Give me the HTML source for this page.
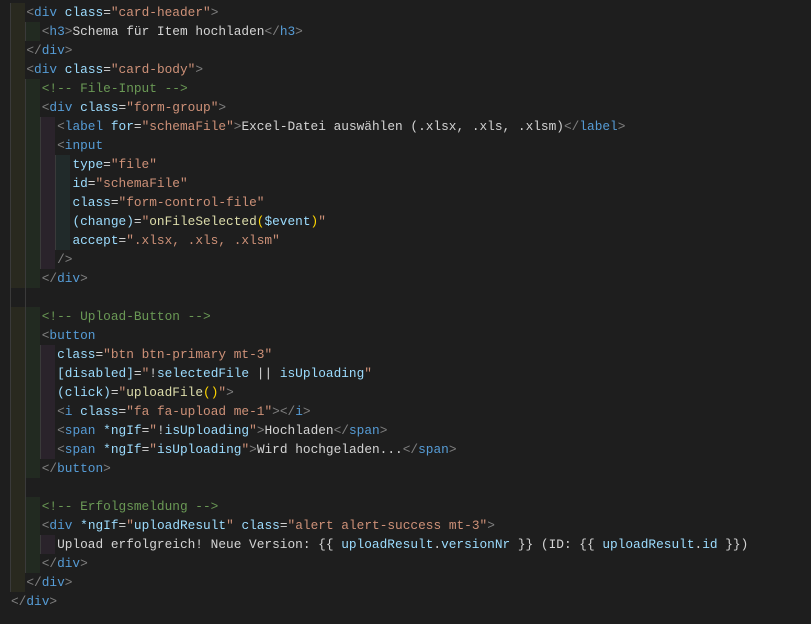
<!DOCTYPE html>
<html><head><meta charset="utf-8"><style>
body{margin:0;background:#1e1e1e;width:811px;height:624px;overflow:hidden}
.c{position:absolute;left:0;top:3px;font-family:"Liberation Mono",monospace;font-size:12.8px;color:#d4d4d4}
.ln{height:19px;line-height:19px;white-space:pre;padding-left:11px;position:relative}
.b{position:absolute;top:0;height:19px;width:15px;border-left:1px solid #3a3a3a;box-sizing:border-box}
.b1{left:10px;background:#29291f}.b2{left:25px;background:#222a21}.b3{left:40px;background:#2a232b}.b4{left:55px;background:#212a2a}
.g{position:absolute;top:0;height:19px;width:1px;background:#3a3a3a}
.t{position:relative}
.p{color:#808080}.n{color:#569cd6}.a{color:#9cdcfe}.s{color:#ce9178}.cm{color:#6a9955}.f{color:#dcdcaa}.y{color:#ffd700}
</style></head><body><div class="c">
<div class="ln"><i class="b b1"></i><span class="t">  <span class="p">&lt;</span><span class="n">div</span> <span class="a">class</span>=<span class="s">"card-header"</span><span class="p">&gt;</span></span></div>
<div class="ln"><i class="b b1"></i><i class="b b2"></i><span class="t">    <span class="p">&lt;</span><span class="n">h3</span><span class="p">&gt;</span>Schema für Item hochladen<span class="p">&lt;/</span><span class="n">h3</span><span class="p">&gt;</span></span></div>
<div class="ln"><i class="b b1"></i><span class="t">  <span class="p">&lt;/</span><span class="n">div</span><span class="p">&gt;</span></span></div>
<div class="ln"><i class="b b1"></i><span class="t">  <span class="p">&lt;</span><span class="n">div</span> <span class="a">class</span>=<span class="s">"card-body"</span><span class="p">&gt;</span></span></div>
<div class="ln"><i class="b b1"></i><i class="b b2"></i><span class="t">    <span class="cm">&lt;!-- File-Input --&gt;</span></span></div>
<div class="ln"><i class="b b1"></i><i class="b b2"></i><span class="t">    <span class="p">&lt;</span><span class="n">div</span> <span class="a">class</span>=<span class="s">"form-group"</span><span class="p">&gt;</span></span></div>
<div class="ln"><i class="b b1"></i><i class="b b2"></i><i class="b b3"></i><span class="t">      <span class="p">&lt;</span><span class="n">label</span> <span class="a">for</span>=<span class="s">"schemaFile"</span><span class="p">&gt;</span>Excel-Datei auswählen (.xlsx, .xls, .xlsm)<span class="p">&lt;/</span><span class="n">label</span><span class="p">&gt;</span></span></div>
<div class="ln"><i class="b b1"></i><i class="b b2"></i><i class="b b3"></i><span class="t">      <span class="p">&lt;</span><span class="n">input</span></span></div>
<div class="ln"><i class="b b1"></i><i class="b b2"></i><i class="b b3"></i><i class="b b4"></i><span class="t">        <span class="a">type</span>=<span class="s">"file"</span></span></div>
<div class="ln"><i class="b b1"></i><i class="b b2"></i><i class="b b3"></i><i class="b b4"></i><span class="t">        <span class="a">id</span>=<span class="s">"schemaFile"</span></span></div>
<div class="ln"><i class="b b1"></i><i class="b b2"></i><i class="b b3"></i><i class="b b4"></i><span class="t">        <span class="a">class</span>=<span class="s">"form-control-file"</span></span></div>
<div class="ln"><i class="b b1"></i><i class="b b2"></i><i class="b b3"></i><i class="b b4"></i><span class="t">        <span class="a">(change)</span>=<span class="s">"</span><span class="f">onFileSelected</span><span class="y">(</span><span class="a">$event</span><span class="y">)</span><span class="s">"</span></span></div>
<div class="ln"><i class="b b1"></i><i class="b b2"></i><i class="b b3"></i><i class="b b4"></i><span class="t">        <span class="a">accept</span>=<span class="s">".xlsx, .xls, .xlsm"</span></span></div>
<div class="ln"><i class="b b1"></i><i class="b b2"></i><i class="b b3"></i><span class="t">      <span class="p">/&gt;</span></span></div>
<div class="ln"><i class="b b1"></i><i class="b b2"></i><span class="t">    <span class="p">&lt;/</span><span class="n">div</span><span class="p">&gt;</span></span></div>
<div class="ln"><i class="g" style="left:10px"></i><i class="g" style="left:25px"></i><span class="t"> </span></div>
<div class="ln"><i class="b b1"></i><i class="b b2"></i><span class="t">    <span class="cm">&lt;!-- Upload-Button --&gt;</span></span></div>
<div class="ln"><i class="b b1"></i><i class="b b2"></i><span class="t">    <span class="p">&lt;</span><span class="n">button</span></span></div>
<div class="ln"><i class="b b1"></i><i class="b b2"></i><i class="b b3"></i><span class="t">      <span class="a">class</span>=<span class="s">"btn btn-primary mt-3"</span></span></div>
<div class="ln"><i class="b b1"></i><i class="b b2"></i><i class="b b3"></i><span class="t">      <span class="a">[disabled]</span>=<span class="s">"</span>!<span class="a">selectedFile</span> || <span class="a">isUploading</span><span class="s">"</span></span></div>
<div class="ln"><i class="b b1"></i><i class="b b2"></i><i class="b b3"></i><span class="t">      <span class="a">(click)</span>=<span class="s">"</span><span class="f">uploadFile</span><span class="y">()</span><span class="s">"</span><span class="p">&gt;</span></span></div>
<div class="ln"><i class="b b1"></i><i class="b b2"></i><i class="b b3"></i><span class="t">      <span class="p">&lt;</span><span class="n">i</span> <span class="a">class</span>=<span class="s">"fa fa-upload me-1"</span><span class="p">&gt;&lt;/</span><span class="n">i</span><span class="p">&gt;</span></span></div>
<div class="ln"><i class="b b1"></i><i class="b b2"></i><i class="b b3"></i><span class="t">      <span class="p">&lt;</span><span class="n">span</span> <span class="a">*ngIf</span>=<span class="s">"</span>!<span class="a">isUploading</span><span class="s">"</span><span class="p">&gt;</span>Hochladen<span class="p">&lt;/</span><span class="n">span</span><span class="p">&gt;</span></span></div>
<div class="ln"><i class="b b1"></i><i class="b b2"></i><i class="b b3"></i><span class="t">      <span class="p">&lt;</span><span class="n">span</span> <span class="a">*ngIf</span>=<span class="s">"</span><span class="a">isUploading</span><span class="s">"</span><span class="p">&gt;</span>Wird hochgeladen...<span class="p">&lt;/</span><span class="n">span</span><span class="p">&gt;</span></span></div>
<div class="ln"><i class="b b1"></i><i class="b b2"></i><span class="t">    <span class="p">&lt;/</span><span class="n">button</span><span class="p">&gt;</span></span></div>
<div class="ln"><i class="b b1"></i><i class="g" style="left:25px"></i><span class="t"> </span></div>
<div class="ln"><i class="b b1"></i><i class="b b2"></i><span class="t">    <span class="cm">&lt;!-- Erfolgsmeldung --&gt;</span></span></div>
<div class="ln"><i class="b b1"></i><i class="b b2"></i><span class="t">    <span class="p">&lt;</span><span class="n">div</span> <span class="a">*ngIf</span>=<span class="s">"</span><span class="a">uploadResult</span><span class="s">"</span> <span class="a">class</span>=<span class="s">"alert alert-success mt-3"</span><span class="p">&gt;</span></span></div>
<div class="ln"><i class="b b1"></i><i class="b b2"></i><i class="b b3"></i><span class="t">      Upload erfolgreich! Neue Version: {{ <span class="a">uploadResult</span>.<span class="a">versionNr</span> }} (ID: {{ <span class="a">uploadResult</span>.<span class="a">id</span> }})</span></div>
<div class="ln"><i class="b b1"></i><i class="b b2"></i><span class="t">    <span class="p">&lt;/</span><span class="n">div</span><span class="p">&gt;</span></span></div>
<div class="ln"><i class="b b1"></i><span class="t">  <span class="p">&lt;/</span><span class="n">div</span><span class="p">&gt;</span></span></div>
<div class="ln"><span class="t"><span class="p">&lt;/</span><span class="n">div</span><span class="p">&gt;</span></span></div>
</div></body></html>
